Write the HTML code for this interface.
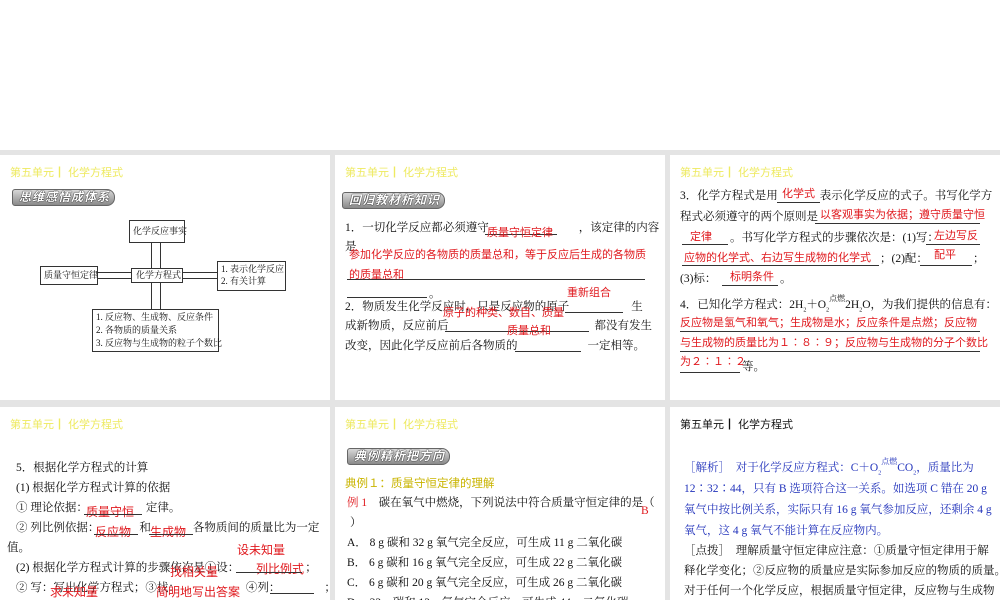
<!DOCTYPE html>
<html><head><meta charset="utf-8"><style>
*{margin:0;padding:0;box-sizing:border-box}
body{width:1000px;height:600px;background:#fff;position:relative;overflow:hidden;font-family:"Liberation Serif","Noto Serif CJK SC","Noto Sans CJK SC",serif;color:#111}
.gray{position:absolute;left:0;top:150px;width:1000px;height:450px;background:#e4e4e4}
.s{position:absolute;background:#fff;overflow:hidden}
.t{position:absolute;white-space:nowrap;font-size:11.5px;line-height:14px}
.hd{position:absolute;left:10px;top:9px;font-size:11px;color:#eeea60;font-family:"Liberation Sans","Noto Sans CJK SC",sans-serif;white-space:nowrap}
.r{color:#e0191e;font-family:"Liberation Sans","Noto Sans CJK SC",sans-serif;font-size:11px}
.s4 .r{font-size:12px}
.b{color:#2233bb}
.u{position:absolute;height:1px;background:#333}
.tag{position:absolute;height:17px;border-radius:3px 8px 8px 3px;background:linear-gradient(#d8d8d8,#8a8a8a);border:1px solid #666;color:#fff;font-size:12px;font-weight:bold;font-style:italic;line-height:15px;padding-left:6px;letter-spacing:1px;text-shadow:0 0 1px #000,0 0 1px #000;font-family:"Liberation Sans","Noto Sans CJK SC",sans-serif;white-space:nowrap}
.box{position:absolute;border:1px solid #333;font-size:9px;line-height:12px;padding:1px 3px;white-space:nowrap;background:#fff}
.ln{position:absolute;background:#333}
</style></head><body>
<div class="gray"></div>

<!-- slide 1 -->
<div class="s" style="left:0;top:155px;width:330px;height:245px">
<div class="hd">第五单元┃ 化学方程式</div>
<div class="tag" style="left:12px;top:34px;width:103px">思维感悟成体系</div>
<div class="ln" style="left:151px;top:88px;width:1px;height:25px"></div>
<div class="ln" style="left:160px;top:88px;width:1px;height:25px"></div>
<div class="ln" style="left:151px;top:128px;width:1px;height:26px"></div>
<div class="ln" style="left:160px;top:128px;width:1px;height:26px"></div>
<div class="ln" style="left:97px;top:117px;width:34px;height:1px"></div>
<div class="ln" style="left:97px;top:123px;width:34px;height:1px"></div>
<div class="ln" style="left:183px;top:117px;width:34px;height:1px"></div>
<div class="ln" style="left:183px;top:123px;width:34px;height:1px"></div>
<div class="box" style="left:129px;top:65px;width:56px;height:23px;line-height:19px">化学反应事实</div>
<div class="box" style="left:131px;top:113px;width:52px;height:15px;line-height:11px;padding:1px 4px">化学方程式</div>
<div class="box" style="left:40px;top:111px;width:58px;height:19px;line-height:15px">质量守恒定律</div>
<div class="box" style="left:217px;top:106px;width:69px;height:30px">1. 表示化学反应<br>2. 有关计算</div>
<div class="box" style="left:92px;top:154px;width:127px;height:43px;line-height:13px">1. 反应物、生成物、反应条件<br>2. 各物质的质量关系<br>3. 反应物与生成物的粒子个数比</div>
</div>

<!-- slide 2 -->
<div class="s" style="left:335px;top:155px;width:330px;height:245px">
<div class="hd">第五单元┃ 化学方程式</div>
<div class="tag" style="left:7px;top:37px;width:103px">回归教材析知识</div>
<div class="t" style="left:10px;top:66px">1．一切化学反应都必须遵守<span style="display:inline-block;width:90px"></span>，该定律的内容</div>
<div class="u" style="left:150px;top:79px;width:72px"></div>
<div class="t r" style="left:152px;top:71px">质量守恒定律</div>
<div class="t" style="left:10px;top:85px">是</div>
<div class="t r" style="left:14px;top:93px">参加化学反应的各物质的质量总和，等于反应后生成的各物质</div>
<div class="u" style="left:12px;top:124px;width:298px"></div>
<div class="t r" style="left:14px;top:113px">的质量总和</div>
<div class="u" style="left:12px;top:142px;width:80px"></div>
<div class="t" style="left:94px;top:132px">。</div>
<div class="t r" style="left:232px;top:131px">重新组合</div>
<div class="t" style="left:10px;top:145px">2．物质发生化学反应时，只是反应物的原子<span style="display:inline-block;width:62px"></span>生</div>
<div class="u" style="left:230px;top:157px;width:58px"></div>
<div class="t r" style="left:108px;top:151px">原子的种类、数目、质量</div>
<div class="t" style="left:10px;top:164px">成新物质，反应前后<span style="display:inline-block;width:146px"></span>都没有发生</div>
<div class="u" style="left:110px;top:176px;width:144px"></div>
<div class="t r" style="left:172px;top:169px">质量总和</div>
<div class="t" style="left:10px;top:184px">改变，因此化学反应前后各物质的<span style="display:inline-block;width:70px"></span>一定相等。</div>
<div class="u" style="left:180px;top:196px;width:66px"></div>
</div>

<!-- slide 3 -->
<div class="s" style="left:670px;top:155px;width:330px;height:245px">
<div class="hd">第五单元┃ 化学方程式</div>
<div class="t" style="left:10px;top:34px">3．化学方程式是用<span style="display:inline-block;width:42px"></span>表示化学反应的式子。书写化学方</div>
<div class="u" style="left:107px;top:47px;width:43px"></div>
<div class="t r" style="left:112px;top:32px">化学式</div>
<div class="t" style="left:10px;top:55px">程式必须遵守的两个原则是</div>
<div class="t r" style="left:150px;top:53px">以客观事实为依据；遵守质量守恒</div>
<div class="u" style="left:145px;top:68px;width:165px"></div>
<div class="t r" style="left:20px;top:75px">定律</div>
<div class="u" style="left:12px;top:89px;width:46px"></div>
<div class="t" style="left:60px;top:76px">。书写化学方程式的步骤依次是：(1)写：</div>
<div class="t r" style="left:264px;top:74px">左边写反</div>
<div class="u" style="left:256px;top:89px;width:54px"></div>
<div class="t r" style="left:14px;top:96px">应物的化学式、右边写生成物的化学式</div>
<div class="u" style="left:12px;top:110px;width:197px"></div>
<div class="t" style="left:210px;top:97px">；(2)配：</div>
<div class="t r" style="left:264px;top:93px">配平</div>
<div class="u" style="left:250px;top:110px;width:52px"></div>
<div class="t" style="left:303px;top:97px">；</div>
<div class="t" style="left:10px;top:117px">(3)标：</div>
<div class="t r" style="left:60px;top:115px">标明条件</div>
<div class="u" style="left:52px;top:130px;width:56px"></div>
<div class="t" style="left:110px;top:117px">。</div>
<div class="t" style="left:10px;top:143px">4．已知化学方程式：2H<sub style="font-size:6px">2</sub>＋O<sub style="font-size:6px">2</sub><span style="position:relative;font-size:8px;top:-7px">点燃</span>2H<sub style="font-size:6px">2</sub>O，为我们提供的信息有：</div>
<div class="t r" style="left:10px;top:161px">反应物是氢气和氧气；生成物是水；反应条件是点燃；反应物</div>
<div class="u" style="left:10px;top:176px;width:300px"></div>
<div class="t r" style="left:10px;top:181px">与生成物的质量比为１∶８∶９；反应物与生成物的分子个数比</div>
<div class="u" style="left:10px;top:196px;width:300px"></div>
<div class="t r" style="left:10px;top:200px">为２∶１∶２</div>
<div class="u" style="left:10px;top:217px;width:60px"></div>
<div class="t" style="left:72px;top:205px">等。</div>
</div>

<!-- slide 4 -->
<div class="s s4" style="left:0;top:407px;width:330px;height:193px">
<div class="hd">第五单元┃ 化学方程式</div>
<div class="t" style="left:16px;top:54px">5．根据化学方程式的计算</div>
<div class="t" style="left:16px;top:74px">(1) 根据化学方程式计算的依据</div>
<div class="t" style="left:16px;top:94px">① 理论依据：<span style="display:inline-block;width:58px"></span>定律。</div>
<div class="t r" style="left:86px;top:98px">质量守恒</div>
<div class="u" style="left:84px;top:107px;width:58px"></div>
<div class="t" style="left:16px;top:114px">② 列比例依据：<span style="display:inline-block;width:40px"></span>和<span style="display:inline-block;width:42px"></span>各物质间的质量比为一定</div>
<div class="t r" style="left:95px;top:118px">反应物</div>
<div class="u" style="left:94px;top:127px;width:44px"></div>
<div class="t r" style="left:150px;top:118px">生成物</div>
<div class="u" style="left:149px;top:127px;width:44px"></div>
<div class="t" style="left:7px;top:134px">值。</div>
<div class="t r" style="left:237px;top:136px">设未知量</div>
<div class="t" style="left:16px;top:154px">(2) 根据化学方程式计算的步骤依次是①设：<span style="display:inline-block;width:66px"></span>；</div>
<div class="t r" style="left:170px;top:158px">找相关量</div>
<div class="t r" style="left:256px;top:155px">列比例式</div>
<div class="u" style="left:236px;top:165px;width:66px"></div>
<div class="t" style="left:16px;top:174px">② 写：写出化学方程式；③找：<span style="display:inline-block;width:66px"></span>④列：<span style="display:inline-block;width:44px"></span>；</div>
<div class="t r" style="left:50px;top:178px">求未知量</div>
<div class="t r" style="left:156px;top:178px">简明地写出答案</div>
<div class="u" style="left:270px;top:186px;width:44px"></div>
</div>

<!-- slide 5 -->
<div class="s" style="left:335px;top:407px;width:330px;height:193px">
<div class="hd">第五单元┃ 化学方程式</div>
<div class="tag" style="left:12px;top:41px;width:103px">典例精析把方向</div>
<div class="t" style="left:10px;top:70px;color:#c9b400;font-family:'Liberation Sans','Noto Sans CJK SC',sans-serif">典例１：质量守恒定律的理解</div>
<div class="t" style="left:12px;top:89px"><span style="color:#e0191e">例 1</span>　碳在氧气中燃烧，下列说法中符合质量守恒定律的是（</div>
<div class="t" style="left:306px;top:97px;color:#e0191e">B</div>
<div class="t" style="left:15px;top:109px">）</div>
<div class="t" style="left:12px;top:129px">A． 8 g 碳和 32 g 氧气完全反应，可生成 11 g 二氧化碳</div>
<div class="t" style="left:12px;top:149px">B． 6 g 碳和 16 g 氧气完全反应，可生成 22 g 二氧化碳</div>
<div class="t" style="left:12px;top:169px">C． 6 g 碳和 20 g 氧气完全反应，可生成 26 g 二氧化碳</div>
<div class="t" style="left:12px;top:189px">D． 32 g 碳和 12 g 氧气完全反应，可生成 44 g 二氧化碳</div>
</div>

<!-- slide 6 -->
<div class="s" style="left:670px;top:407px;width:330px;height:193px">
<div class="hd" style="color:#111">第五单元┃ 化学方程式</div>
<div class="t b" style="left:14px;top:54px">［解析］　对于化学反应方程式：C＋O<sub style="font-size:6px">2</sub><span style="position:relative;font-size:8px;top:-7px">点燃</span>CO<sub style="font-size:6px">2</sub>，质量比为</div>
<div class="t b" style="left:14px;top:75px">12∶32∶44，只有 B 选项符合这一关系。如选项 C 错在 20 g</div>
<div class="t b" style="left:14px;top:96px">氧气中按比例关系，实际只有 16 g 氧气参加反应，还剩余 4 g</div>
<div class="t b" style="left:14px;top:117px">氧气，这 4 g 氧气不能计算在反应物内。</div>
<div class="t" style="left:14px;top:137px">［点拨］　理解质量守恒定律应注意：①质量守恒定律用于解</div>
<div class="t" style="left:14px;top:157px">释化学变化；②反应物的质量应是实际参加反应的物质的质量。</div>
<div class="t" style="left:14px;top:177px">对于任何一个化学反应，根据质量守恒定律，反应物与生成物</div>
</div>
</body></html>
